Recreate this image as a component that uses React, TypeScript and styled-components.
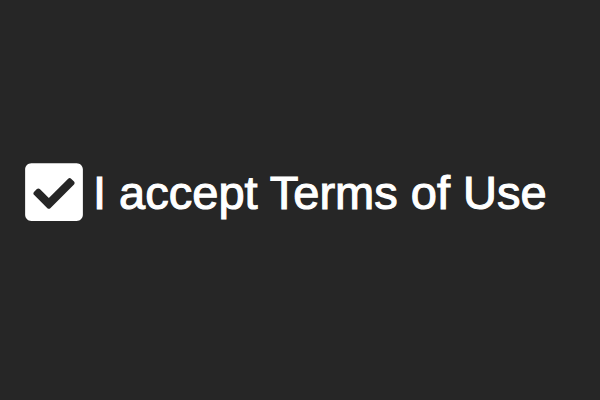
import React, { useState } from 'react'
import styled, { createGlobalStyle } from 'styled-components'

const GlobalStyle = createGlobalStyle`
    html, body {
        margin: 0;
        padding: 0;
        background: #262626;
    }
`

const Page = styled.div`
    width: 600px;
    height: 400px;
    box-sizing: border-box;
    padding: 159px 0 0 25px;
    background: #262626;
`

const Label = styled.label`
    display: inline-flex;
    align-items: center;
    gap: 10px;
    cursor: pointer;
    user-select: none;
`

const HiddenInput = styled.input`
    display: none;
`

const Box = styled.svg`
    display: block;
    width: 58px;
    height: 66px;
    fill: #ffffff;
`

const Text = styled.span`
    font-family: "Liberation Sans", Arial, sans-serif;
    font-size: 47px;
    line-height: 1;
    color: #ffffff;
    -webkit-text-stroke: 1.1px #ffffff;
`

const CheckBox = ({ checked }: { checked: boolean }) => (
    <Box viewBox="0 0 448 512">
        {checked ? (
            <path d="M400 480H48c-26.51 0-48-21.49-48-48V80c0-26.51 21.49-48 48-48h352c26.51 0 48 21.49 48 48v352c0 26.51-21.49 48-48 48zm-204.686-98.059l184-184c6.248-6.248 6.248-16.379 0-22.627l-22.627-22.627c-6.248-6.248-16.379-6.249-22.628 0L184 302.745l-70.059-70.059c-6.248-6.248-16.379-6.248-22.628 0l-22.627 22.627c-6.248 6.248-6.248 16.379 0 22.627l104 104c6.249 6.25 16.379 6.25 22.628.001z" />
        ) : (
            <path d="M400 32H48C21.5 32 0 53.5 0 80v352c0 26.5 21.5 48 48 48h352c26.5 0 48-21.5 48-48V80c0-26.5-21.5-48-48-48z" />
        )}
    </Box>
)

const App = () => {
    const [accepted, setAccepted] = useState(true)
    return (
        <>
            <GlobalStyle />
            <Page>
                <Label>
                    <HiddenInput
                        type="checkbox"
                        checked={accepted}
                        onChange={() => setAccepted(!accepted)}
                    />
                    <CheckBox checked={accepted} />
                    <Text>I accept Terms of Use</Text>
                </Label>
            </Page>
        </>
    )
}

export default App
